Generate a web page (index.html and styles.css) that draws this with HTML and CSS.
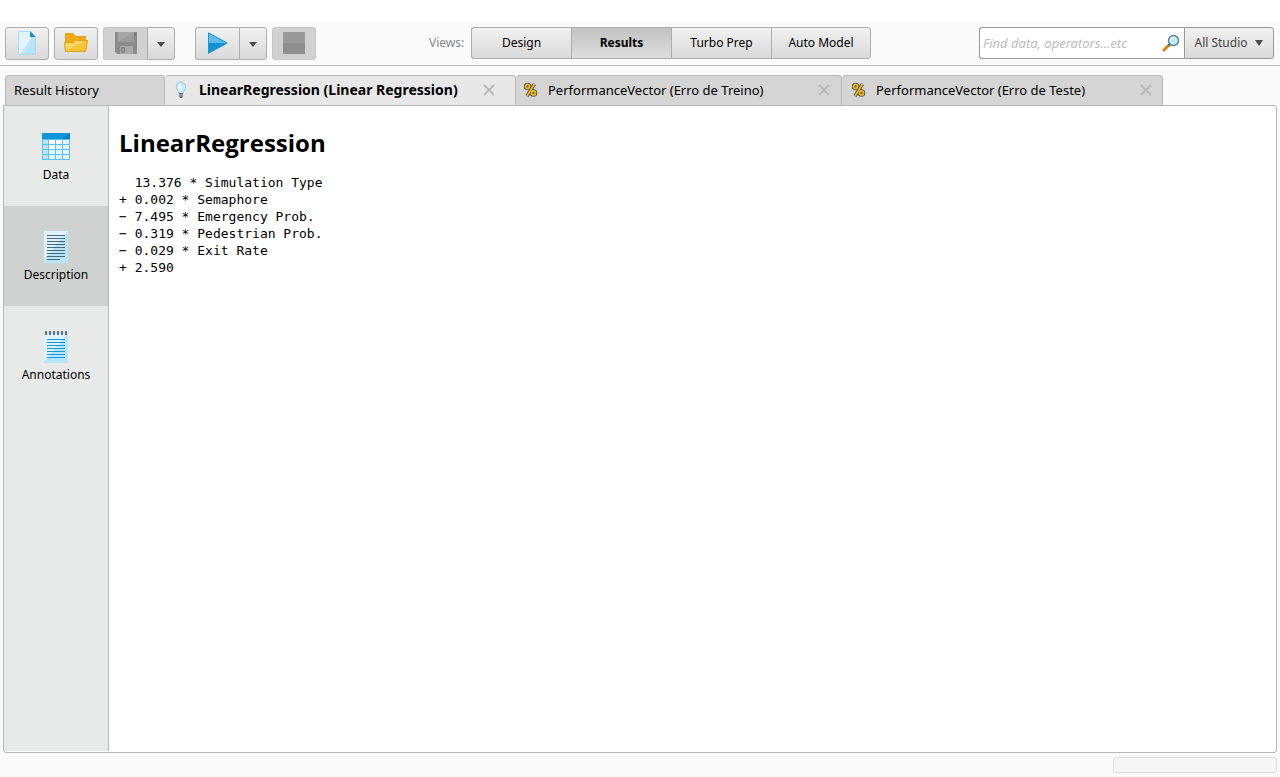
FILE: index.html
```html
<!DOCTYPE html>
<html lang="en">
<head>
<meta charset="utf-8">
<title>Studio – Results</title>
<link rel="stylesheet" href="styles.css">
</head>
<body>
<header class="toolbar">
  <div class="tools">
    <button class="btn tool" aria-label="New process"><svg width="24" height="24" viewBox="0 0 24 24"><path d="M3 0h12l6 6v18H3z" fill="#b9e3f9"/><path d="M3 0h12l3 5L5 24H3z" fill="#e1f4fc"/><path d="M15 0l6 6h-6z" fill="#1590cf"/><path d="M3.500.500h11.500M20.500 6v17.500h-17V.500" fill="none" stroke="#a5daf2"/></svg></button>
    <button class="btn tool" aria-label="Open process"><svg width="26" height="24" viewBox="0 0 26 24"><path d="M2 2h8l2 3h11v16H2z" fill="#f2aa12"/><path d="M1 11h10l2-2h12l-2 12H2z" fill="#f6c434"/><path d="M1 11h10l2-2h12L2 20z" fill="#f7d567"/><path d="M2.500 11V2.500H10l2 3h10.500V9M1.500 11.500H11l2-2h11.500l-2 11h-20z" fill="none" stroke="#e3a01b"/></svg></button>
    <div class="split">
      <button class="btn tool disabled" aria-label="Save" disabled><svg width="24" height="24" viewBox="0 0 24 24"><path d="M1 1h22v22H3l-2-2z" fill="#8b8b8b"/><path d="M4 1h16v10H4z" fill="#a5a5a5"/><path d="M4 11L20 1v10z" fill="#9b9b9b"/><path d="M6 15h13v8H6z" fill="#a9a9a9"/><path d="M7.500 16.500h3v5h-3z" fill="#999" stroke="#7d7d7d"/><path d="M20 2h2v3h-2z" fill="#777"/></svg></button>
      <button class="btn drop" aria-label="Save options"><svg width="10" height="6" viewBox="0 0 10 6"><path d="M1 0h8L5 5z" fill="#4b4b4b"/></svg></button>
    </div>
    <div class="split run">
      <button class="btn tool" aria-label="Run"><svg width="24" height="24" viewBox="0 0 24 24"><path d="M2 1l20 11H2z" fill="#5fbdec"/><path d="M2 12h20L2 23z" fill="#0e93d8"/><path d="M2.500 2v20L21 12z" fill="none" stroke="#2595d0"/></svg></button>
      <button class="btn drop" aria-label="Run options"><svg width="10" height="6" viewBox="0 0 10 6"><path d="M1 0h8L5 5z" fill="#4b4b4b"/></svg></button>
    </div>
    <button class="btn tool disabled" aria-label="Stop" disabled><svg width="22" height="22" viewBox="0 0 22 22"><path d="M0 0h22v22H0z" fill="#8f8f8f"/><path d="M0 0h22v11H0z" fill="#999"/></svg></button>
  </div>
  <nav class="views" aria-label="Views">
    <span class="views-label">Views:</span>
    <div class="split">
      <button class="btn view">Design</button>
      <button class="btn view current" aria-current="page">Results</button>
      <button class="btn view">Turbo Prep</button>
      <button class="btn view">Auto Model</button>
    </div>
  </nav>
  <form class="search">
    <div class="field">
      <input type="text" aria-label="Search" placeholder="Find data, operators...etc">
      <svg width="18" height="18" viewBox="0 0 18 18"><path d="M2 16l6-6" stroke="#d9820e" stroke-width="3" stroke-linecap="round"/><path d="M6.500 11.500l2-2" stroke="#59646b" stroke-width="2"/><circle cx="11.500" cy="6.500" r="5" fill="#c4eafb" stroke="#4e8196" stroke-width="1.300"/><path d="M8 7a4 4 0 0 1 5-4z" fill="#edfaff"/></svg>
    </div>
    <button type="button" class="btn scope">All Studio <svg width="10" height="6" viewBox="0 0 10 6"><path d="M1 0h8L5 6z" fill="#4b4b4b"/></svg></button>
  </form>
</header>

<main class="workspace">
  <div class="tabs" role="tablist">
    <div class="tab history"><button class="tab-name" role="tab">Result History</button></div>
    <div class="tab model active">
      <svg class="tab-icon" width="16" height="18" viewBox="0 0 16 18"><path d="M8 1a4.700 4.700 0 0 0-4.700 4.700C3.300 8.500 5.500 9.500 6 13h4c.5-3.500 2.700-4.500 2.700-7.300A4.700 4.700 0 0 0 8 1z" fill="#c6eafb" stroke="#97cbe2"/><path d="M5 6a3 3 0 0 1 3-3v8z" fill="#f2fbff"/><path d="M6 12h4v3l-1 2H7l-1-2z" fill="#68747a"/><path d="M6 14h4" stroke="#aab4b8"/></svg>
      <button class="tab-name" role="tab" aria-selected="true">LinearRegression (Linear Regression)</button>
      <button class="close" aria-label="Close tab"><svg width="12" height="12" viewBox="0 0 12 12"><path d="M1 1l10 10M11 1L1 11"/></svg></button>
    </div>
    <div class="tab train">
      <svg class="tab-icon" width="14" height="18" viewBox="1 0 14 18"><g fill="none" stroke="#435260" stroke-width="3.600"><circle cx="4.500" cy="5.500" r="2"/><circle cx="10.500" cy="12" r="2"/><path d="M11.500 3L4 15"/></g><g fill="none" stroke="#f5b51b" stroke-width="1.800"><circle cx="4.500" cy="5.500" r="2"/><circle cx="10.500" cy="12" r="2"/><path d="M11.500 3L4 15"/></g></svg>
      <button class="tab-name" role="tab">PerformanceVector (Erro de Treino)</button>
      <button class="close" aria-label="Close tab"><svg width="12" height="12" viewBox="0 0 12 12"><path d="M1 1l10 10M11 1L1 11"/></svg></button>
    </div>
    <div class="tab test">
      <svg class="tab-icon" width="14" height="18" viewBox="1 0 14 18"><g fill="none" stroke="#435260" stroke-width="3.600"><circle cx="4.500" cy="5.500" r="2"/><circle cx="10.500" cy="12" r="2"/><path d="M11.500 3L4 15"/></g><g fill="none" stroke="#f5b51b" stroke-width="1.800"><circle cx="4.500" cy="5.500" r="2"/><circle cx="10.500" cy="12" r="2"/><path d="M11.500 3L4 15"/></g></svg>
      <button class="tab-name" role="tab">PerformanceVector (Erro de Teste)</button>
      <button class="close" aria-label="Close tab"><svg width="12" height="12" viewBox="0 0 12 12"><path d="M1 1l10 10M11 1L1 11"/></svg></button>
    </div>
  </div>

  <div class="panel">
    <nav class="side" aria-label="Result sections">
      <button class="side-item"><svg width="32" height="32" viewBox="0 0 32 32"><path d="M2 2h28v27H2z" fill="#5bc0ee"/><path d="M2 2h28v6H2z" fill="#0e95d9"/><path d="M30 2v6h-8z" fill="#0b80c0"/><g fill="#e3f5fd"><path d="M3 9h5v4H3zM9 9h6v4H9zM16 9h6v4h-6zM23 9h6v4h-6zM3 14h5v4H3zM9 14h6v4H9zM16 14h6v4h-6zM23 14h6v4h-6zM3 19h5v4H3zM9 19h6v4H9zM16 19h6v4h-6zM23 19h6v4h-6zM3 24h5v4H3zM9 24h6v4H9zM16 24h6v4h-6zM23 24h6v4h-6z"/></g><path d="M9 9h6v4H9zM16 9h6v4h-6zM9 14h6v4H9z" fill="#fff"/><path d="M3 9h5v4H3zM3 14h5v4H3zM3 19h5v4H3zM3 24h5v4H3z" fill="#b9e5fa"/></svg>Data</button>
      <button class="side-item selected"><svg width="32" height="32" viewBox="0 0 32 32"><path d="M4 0h24v32H4z" fill="#b7e4f9"/><path d="M4 0h24L4 29z" fill="#dff3fc"/><path d="M7 4.500h18M7 7.500h18M7 10.500h18M7 13.500h18M7 16.500h18M7 19.500h18M7 22.500h18M7 25.500h18M7 28.500h13" stroke="#4b6675"/></svg>Description</button>
      <button class="side-item"><svg width="32" height="32" viewBox="0 0 32 32"><path d="M4 2h24v30H4z" fill="#b7e4f9"/><path d="M4 2h24L4 31z" fill="#dff3fc"/><path d="M4 2h24" stroke="#9ed8f3"/><path d="M6 0v4M10 0v4M14 0v4M18 0v4M22 0v4M26 0v4" stroke="#66757d" stroke-width="2"/><path d="M7 8.500h18M7 11.500h18M7 14.500h18M7 17.500h18M7 20.500h18M7 23.500h18M7 26.500h18" stroke="#1598da"/></svg>Annotations</button>
    </nav>
    <section class="content">
      <h1>LinearRegression</h1>
<pre>  13.376 * Simulation Type
+ 0.002 * Semaphore
− 7.495 * Emergency Prob.
− 0.319 * Pedestrian Prob.
− 0.029 * Exit Rate
+ 2.590</pre>
    </section>
  </div>
</main>
<footer class="status"><div class="progress"></div></footer>
</body>
</html>
```
FILE: styles.css
```css
* { box-sizing: border-box; }

body {
  margin: 0;
  padding-top: 22px;
  min-height: 100vh;
  display: flex;
  flex-direction: column;
  background: linear-gradient(#fff 22px, #fafafa 22px);
  color: #000;
  font: 12px/16px "Noto Sans", "Open Sans", sans-serif;
}

button {
  margin: 0;
  padding: 0;
  border: 0;
  background: none;
  color: inherit;
  font: inherit;
}

svg { display: block; flex: none; }

.toolbar {
  display: flex;
  justify-content: space-between;
  padding: 5px 6px 5px 5px;
  border-bottom: 1px solid #b8b8b8;
}

.tools { display: flex; gap: 5px; padding-right: 5px; }
.split { display: flex; }
.run { margin: 0 0 0 15px; }

.btn {
  display: flex;
  align-items: center;
  justify-content: center;
  height: 33px;
  border: 1px solid #adadad;
  border-radius: 3px;
  background: linear-gradient(#f1f1f1, #dadada);
}

.tool { width: 44px; padding-bottom: 1px; }
.drop { width: 28px; }
.drop svg { margin-top: 2px; }
.disabled { background: #d1d1d1; border-color: #c6c6c6; }
.split .btn:not(:last-child) {
  border-right: 0;
  border-top-right-radius: 0;
  border-bottom-right-radius: 0;
}
.split .btn:not(:first-child) {
  border-top-left-radius: 0;
  border-bottom-left-radius: 0;
}

.views { display: flex; align-items: flex-start; }
.views-label { width: 42px; line-height: 32px; color: #888; }
.view { width: 100px; height: 32px; }
.current { background: linear-gradient(#c2c2c2, #dedede); font-weight: 700; }

.search { display: flex; align-items: flex-start; }
.field {
  display: flex;
  align-items: center;
  width: 205px;
  height: 32px;
  padding: 0 4px 0 3px;
  border: 1px solid #999;
  border-right: 0;
  border-radius: 3px 0 0 3px;
  background: #fff;
}
.field input {
  flex: 1;
  min-width: 0;
  padding: 0;
  border: 0;
  outline: 0;
  background: none;
  font: inherit;
  font-size: 13px;
}
.field input::placeholder { color: #bcbcbc; font-style: italic; opacity: 1; }
.scope {
  gap: 6px;
  width: 90px;
  height: 32px;
  border-color: #999;
  border-radius: 0 3px 3px 0;
  color: #444;
}

.workspace {
  flex: 1;
  display: flex;
  flex-direction: column;
  padding: 9px 3px 0;
}

.tabs { display: flex; padding-left: 2px; }
.tab {
  display: flex;
  align-items: center;
  height: 30px;
  padding: 0 11px 2px 8px;
  border: 1px solid #b8b8b8;
  border-width: 1px 1px 0 0;
  border-radius: 4px 4px 0 0;
  background: #d5d5d5;
  font-size: 13px;
}
.tab-name { margin-left: 10px; white-space: nowrap; }
.history { width: 160px; border-left-width: 1px; }
.history .tab-name { margin-left: 0; }
.model { width: 351px; padding-right: 20px; }
.train { width: 326px; }
.test { width: 321px; padding-left: 10px; padding-right: 10px; }
.active { background: #e8e8e8; font-size: 14px; font-weight: 700; }
.close { margin-left: auto; }
.close svg { fill: none; stroke: #b9b9b9; stroke-width: 2; }

.panel {
  flex: 1;
  display: flex;
  border: 1px solid #b8b8b8;
  border-radius: 0 3px 3px 3px;
  background: #fff;
}
.side {
  width: 105px;
  margin-bottom: 1px;
  border-right: 1px solid #b8b8b8;
  background: #e8eae9;
}
.side-item {
  display: flex;
  flex-direction: column;
  align-items: center;
  gap: 4px;
  width: 100%;
  height: 100px;
  padding-top: 25px;
}
.selected { background: #d0d2d1; }

.content { flex: 1; padding: 20px 10px; }
h1 {
  margin: 0 0 14px;
  font: 700 24px/34px "Open Sans", sans-serif;
}
pre {
  margin: 0;
  font: 13px/17px "DejaVu Sans Mono", monospace;
}

.status { display: flex; justify-content: flex-end; padding: 4px 3px; }
.progress {
  width: 164px;
  height: 16px;
  border: 1px solid #dcdcdc;
  border-radius: 3px;
  background: #f6f6f6;
}
```
